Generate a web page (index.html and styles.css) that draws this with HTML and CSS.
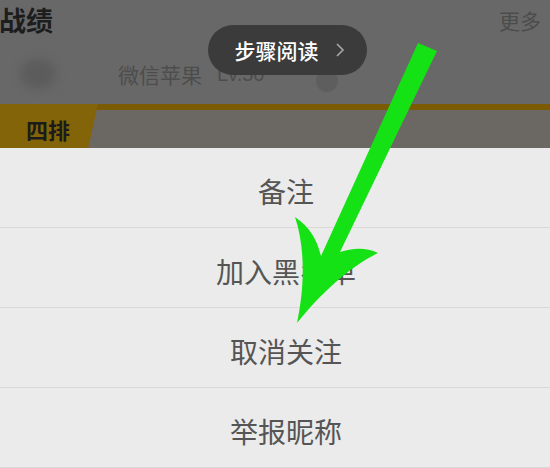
FILE: index.html
```html
<!DOCTYPE html>
<html lang="zh-CN">
<head>
    <meta charset="UTF-8">
    <meta name="viewport" content="width=device-width, initial-scale=1.0">
    <title>战绩</title>
    <link rel="stylesheet" href="styles.css">
</head>
<body>
    <div class="screen">
        <div class="backdrop">
            <div class="head-row">
                <span class="title">战绩</span>
                <span class="more">更多</span>
            </div>
            <div class="player-row">
                <span class="avatar"></span>
                <span class="nick">微信苹果</span>
                <span class="level">Lv.50</span>
                <span class="dot"></span>
            </div>
            <div class="mode-band">
                <span class="mode-tab">四排</span>
            </div>
        </div>

        <ul class="sheet">
            <li>备注</li>
            <li>加入黑名单</li>
            <li>取消关注</li>
            <li>举报昵称</li>
        </ul>

        <div class="step-pill">
            <span>步骤阅读</span>
            <svg width="10" height="16" viewBox="0 0 10 16"><path d="M2 2 L8 8 L2 14" fill="none" stroke="#a8a8a8" stroke-width="1.6"/></svg>
        </div>

        <svg class="arrow" width="550" height="468" viewBox="0 0 550 468">
            <path d="M418 43 L437 51 L340 252 C352 248 366 247 378 253 C351 266 322 292 297 323 C304 290 306 250 295 217 C310 227 317 240 321 256 Z" fill="#14e214"/>
        </svg>
    </div>
</body>
</html>
```

FILE: styles.css
```css
body {
    margin: 0;
    font-family: "Noto Sans CJK SC", "Noto Sans", sans-serif;
    background: #ebebeb;
}

.screen {
    position: relative;
    width: 550px;
    height: 468px;
    overflow: hidden;
}

.backdrop {
    height: 148px;
    background: #686868;
    display: flex;
    flex-direction: column;
}

.head-row {
    height: 44px;
    display: flex;
    justify-content: space-between;
    align-items: flex-start;
}

.title {
    font-size: 27px;
    line-height: 27px;
    font-weight: 700;
    color: #1d1d1d;
    margin-top: 6px;
    margin-left: -1px;
}

.more {
    font-size: 21px;
    line-height: 21px;
    color: #4c4c4c;
    margin-top: 10px;
    margin-right: 9px;
}

.player-row {
    height: 60px;
    display: flex;
    align-items: center;
}

.avatar {
    width: 36px;
    height: 30px;
    border-radius: 50%;
    background: #5c5c5c;
    filter: blur(5px);
    margin-left: 20px;
}

.nick {
    font-size: 21px;
    line-height: 21px;
    color: #4d4d4d;
    margin-left: 62px;
}

.level {
    font-family: "Liberation Sans", sans-serif;
    font-size: 20px;
    color: #4d4d4d;
    margin-left: 15px;
}

.dot {
    width: 22px;
    height: 22px;
    border-radius: 50%;
    background: #5e5e5e;
    margin-left: 52px;
    margin-top: 14px;
}

.mode-band {
    flex: 1;
    border-top: 6px solid #7c5b05;
    background: #6b6863;
    display: flex;
}

.mode-tab {
    width: 98px;
    margin-top: -6px;
    background: #846408;
    clip-path: polygon(0 0, 100% 0, 90% 100%, 0 100%);
    font-size: 22px;
    font-weight: 700;
    color: #1b1b1b;
    padding: 10px 0 0 26px;
    box-sizing: border-box;
    line-height: 30px;
}

.sheet {
    list-style: none;
    margin: 0;
    padding: 0;
    background: #ebebeb;
}

.sheet li {
    height: 73px;
    border-bottom: 1px solid #d9d9d9;
    display: flex;
    align-items: center;
    justify-content: center;
    padding: 6px 0 0 22px;
    font-size: 28px;
    color: #555555;
}

.step-pill {
    position: absolute;
    left: 208px;
    top: 25px;
    width: 159px;
    height: 50px;
    border-radius: 25px;
    background: #3b3b3b;
    display: flex;
    align-items: center;
    justify-content: center;
    gap: 16px;
    padding-left: 4px;
    box-sizing: border-box;
    color: #ffffff;
    font-size: 21px;
    font-weight: 500;
}

.arrow {
    position: absolute;
    left: 0;
    top: 0;
}
```
